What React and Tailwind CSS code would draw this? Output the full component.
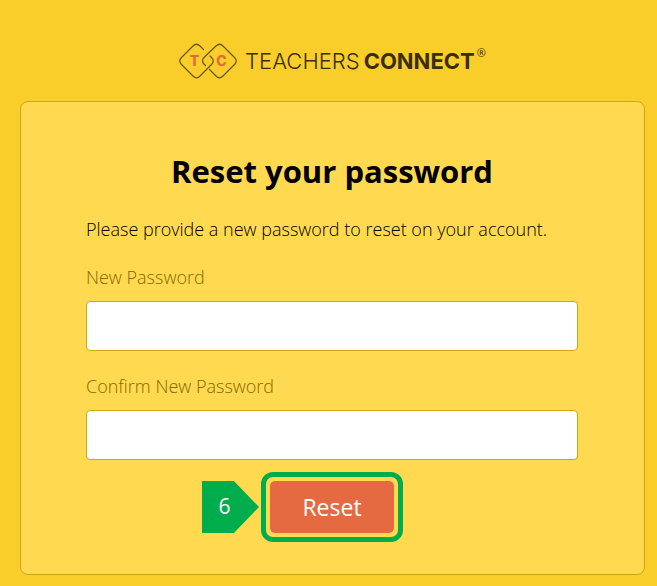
import React from 'react';
import { useState } from 'react';

const Logo = () => {
    return (
        <div className="flex items-center justify-center text-[#3a2d08]">
            <svg
                viewBox="0 0 58 36"
                className="w-[58px] h-9 mr-2 shrink-0"
                fill="none"
                stroke="#6b5410"
                strokeWidth="1.2"
                strokeLinecap="round"
                role="img"
                aria-label="TC"
            >
                <path d="M24.5 6.5 L21 3 Q17.5 -0.5 14 3 L2.5 14.5 Q-1 18 2.5 21.5 L14 33 Q17.5 36.5 21 33 L32.5 21.5 Q36 18 32.5 14.5 L31 13" />
                <path d="M26.5 22.5 L25 21 Q22 18 25 14.5 L37 3 Q40.5 -0.5 44 3 L55.5 14.5 Q59 18 55.5 21.5 L44 33 Q40.5 36.5 37 33 L30.5 26.5" />
                <text
                    x="15.5"
                    y="23"
                    textAnchor="middle"
                    stroke="none"
                    className="fill-[#e9693c] font-['Inter'] text-[14px] font-extrabold"
                >
                    T
                </text>
                <text
                    x="42.5"
                    y="23"
                    textAnchor="middle"
                    stroke="none"
                    className="fill-[#e9693c] font-['Inter'] text-[14px] font-extrabold"
                >
                    C
                </text>
            </svg>
            <span className="font-['Inter',sans-serif] text-[22px] leading-9 font-light">
                TEACHERS
            </span>
            <span className="font-['Inter',sans-serif] text-[22px] leading-9 font-bold ml-1">
                CONNECT
            </span>
            <span className="font-['Open_Sans',sans-serif] text-[11px] leading-5 self-start ml-0.5">
                ®
            </span>
        </div>
    );
};

const PasswordField = ({ id, label, value, onChange }) => {
    return (
        <div className="flex flex-col mb-[23px]">
            <label
                htmlFor={id}
                className="text-[18px] leading-6 font-light text-[#856900] mb-3"
            >
                {label}
            </label>
            <input
                id={id}
                type="password"
                value={value}
                onChange={(e) => onChange(e.target.value)}
                className="w-full h-[50px] px-3 bg-white border border-[#cfa616] rounded outline-none"
            />
        </div>
    );
};

const App = () => {
    const [password, setPassword] = useState('');
    const [confirm, setConfirm] = useState('');

    return (
        <div className="min-h-screen w-full bg-[#f9ce2a] pt-[43px] pb-3 pl-5 pr-3 font-['Open_Sans',sans-serif]">
            <header className="mb-[22px]">
                <Logo />
            </header>

            <main className="bg-[#ffda50] border border-[#cfa616] rounded-lg pl-[65px] pr-[66px] pt-[45px] pb-8">
                <h1 className="text-[31px] leading-[48px] font-bold text-black text-center">
                    Reset your password
                </h1>
                <p className="text-[18px] leading-6 font-light text-black mt-[22px] mb-6">
                    Please provide a new password to reset on your account.
                </p>

                <form onSubmit={(e) => e.preventDefault()}>
                    <PasswordField
                        id="new-password"
                        label="New Password"
                        value={password}
                        onChange={setPassword}
                    />
                    <PasswordField
                        id="confirm-password"
                        label="Confirm New Password"
                        value={confirm}
                        onChange={setConfirm}
                    />

                    {/* Step marker and highlighted submit button */}
                    <div className="flex justify-center -mt-[11px]">
                        <div className="relative border-5 border-[#00ad4d] rounded-xl p-1">
                            <button
                                type="submit"
                                className="block w-[124px] h-[52px] bg-[#e66a41] rounded-[5px] text-white text-[23px] leading-8"
                            >
                                Reset
                            </button>
                            <div className="absolute right-full top-1 mr-[7px] w-[57px] h-[52px] pr-3 flex items-center justify-center bg-[#00ad4d] text-white text-[21px] [clip-path:polygon(0_0,56%_0,100%_50%,56%_100%,0_100%)]">
                                6
                            </div>
                        </div>
                    </div>
                </form>
            </main>
        </div>
    );
};

export default App;
